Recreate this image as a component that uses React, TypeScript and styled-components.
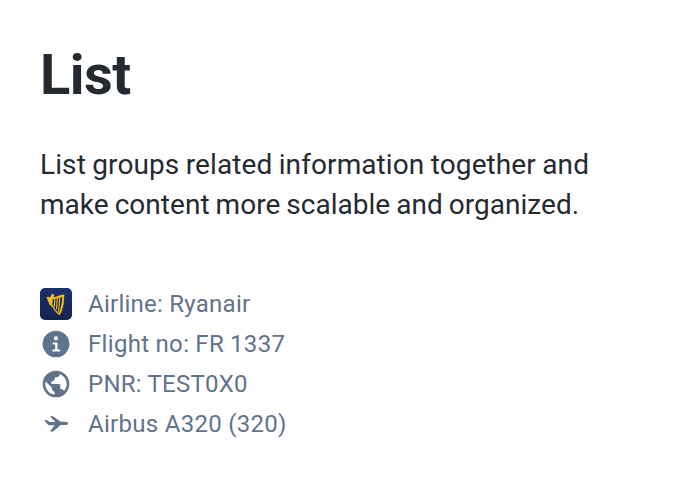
import React from "react";
import styled, { createGlobalStyle } from "styled-components";

const GlobalStyle = createGlobalStyle`
  * { box-sizing: border-box; }
  body { margin: 0; background: #fff; font-family: Roboto, sans-serif; color: #252a31; }
`;
const Page = styled.main`
  width: 686px;
  height: 480px;
  padding: 41px 40px 40px;
  overflow: hidden;
`;
const Title = styled.h1`
  margin: 0;
  font-size: 56px;
  line-height: 68px;
  font-weight: 700;
  letter-spacing: -0.56px;
`;
const Intro = styled.p`
  margin: 36px 0 0;
  font-size: 28px;
  line-height: 40px;
`;
const Line = styled.span<{ $letter?: number; $word?: number }>`
  display: block;
  white-space: nowrap;
  letter-spacing: ${(p) => p.$letter ?? 0}px;
  word-spacing: ${(p) => p.$word ?? 0}px;
`;
const List = styled.ul`
  list-style: none;
  margin: 59px 0 0;
  padding: 0;
`;
const Item = styled.li<{ $letter?: number; $word?: number }>`
  display: flex;
  align-items: center;
  gap: 16px;
  height: 40px;
  font-size: 24px;
  line-height: 40px;
  letter-spacing: ${(p) => p.$letter ?? 0.29}px;
  word-spacing: ${(p) => p.$word ?? 0}px;
  color: #5f738c;
`;
const Icon = styled.svg`
  width: 32px;
  height: 32px;
  flex: none;
  fill: currentColor;
`;

const RyanairLogo = () => (
  <Icon viewBox="0 0 32 32">
    <defs>
      <linearGradient id="navy" x1="0" y1="0" x2="0" y2="1">
        <stop offset="0" stopColor="#1a3069" />
        <stop offset="1" stopColor="#142452" />
      </linearGradient>
    </defs>
    <rect width="32" height="32" rx="5" fill="url(#navy)" />
    <g fill="#f5bb1b">
      <path d="M6.800 8.400C8.200 9.600 9.700 9.400 10.900 8.500 10.700 7 11.500 5.800 12.800 5.900 13.900 6 14.500 6.900 14.200 8 13.900 9.200 13 9.900 12.800 11L12.400 15C12.300 16.400 12.500 17.800 13.300 19L12 18.400C10 17.300 9 16 8.900 14.400 7.900 13.500 7.500 12.500 7.600 11.500 6.800 10.500 6.500 9.300 6.800 8.400Z" />
      <path d="M13 9.200C15.800 9.900 18.500 6.800 24.400 6.600L23.600 16.500 21.300 24.500 19.200 27.300 18.600 25.800C20.100 22.800 21.900 17 22.300 9 18.500 9.200 16 11.500 12.900 11.100Z" />
    </g>
    <path
      fill="none"
      stroke="#f5bb1b"
      strokeWidth="1.1"
      d="M14.800 10.700 14.400 18.700M17.300 9.800 16.500 21.400M19.900 8.900 18.500 23.800M12.500 17.500C13.500 20.800 16.200 23.800 19.300 26.300"
    />
  </Icon>
);
const InfoIcon = () => (
  <Icon viewBox="0 0 24 24">
    <path d="M12 2a10 10 0 1 0 0 20 10 10 0 0 0 0-20zm0 4.100a1.600 1.600 0 1 1 0 3.200 1.600 1.600 0 0 1 0-3.200zM14.500 17.700H10a.8.8 0 0 1 0-1.600h1.400v-3.700H10.200a.8.8 0 0 1 0-1.600h2a.9.9 0 0 1 .9.9v4.400h1.400a.8.8 0 0 1 0 1.600z" />
  </Icon>
);
const GlobeIcon = () => (
  <Icon viewBox="0 0 24 24">
    <path
      fillRule="evenodd"
      d="M12 2a10 10 0 1 0 0 20 10 10 0 0 0 0-20zM4.200 10.200 8.400 14.300C8.900 14.700 9 15 9 15.500 9.100 16.800 9.800 17.500 11 17.900V19.900C7 19.500 4 16.100 4 12 4 11.400 4.100 10.800 4.200 10.200zM14.800 4.500C18 5.800 20 8.700 20 12 20 14 19.300 15.900 18 17.300 17.600 16.500 17 16 16 16H15.200V13.200C15.200 12.500 14.700 12 14 12H9.200C8.300 12 8 11 8.600 10.400L10.600 9.200C11 8.900 11 8.500 11 8 11 7.300 11.400 7 12.200 7 13.700 6.900 14.700 6.200 14.800 4.500z"
    />
  </Icon>
);
const PlaneIcon = () => (
  <Icon viewBox="0 0 32 32">
    <path d="M4.300 12.100H6.600L10 14.100H15.400L9.800 8.300H13L20.700 13.800H25.600C27 13.900 28 14.600 28 15.500S27 17 25.600 17.100H20.600L13.200 23.500H9.900L14.600 17.300H10.500C9 17.300 8 16.900 7.200 16Z" />
  </Icon>
);

export default function App() {
  return (
    <>
      <GlobalStyle />
      <Page>
        <Title>List</Title>
        <Intro>
          <Line $letter={0.1} $word={-0.7}>List groups related information together and </Line>
          <Line $word={-1} $letter={0.03}>make content more scalable and organized.</Line>
        </Intro>
        <List>
          <Item $letter={0.25}><RyanairLogo />Airline: Ryanair</Item>
          <Item $letter={0.34} $word={-0.3}><InfoIcon />Flight no: FR 1337</Item>
          <Item $letter={0.24}><GlobeIcon />PNR: TEST0X0</Item>
          <Item><PlaneIcon />Airbus A320 (320)</Item>
        </List>
      </Page>
    </>
  );
}
